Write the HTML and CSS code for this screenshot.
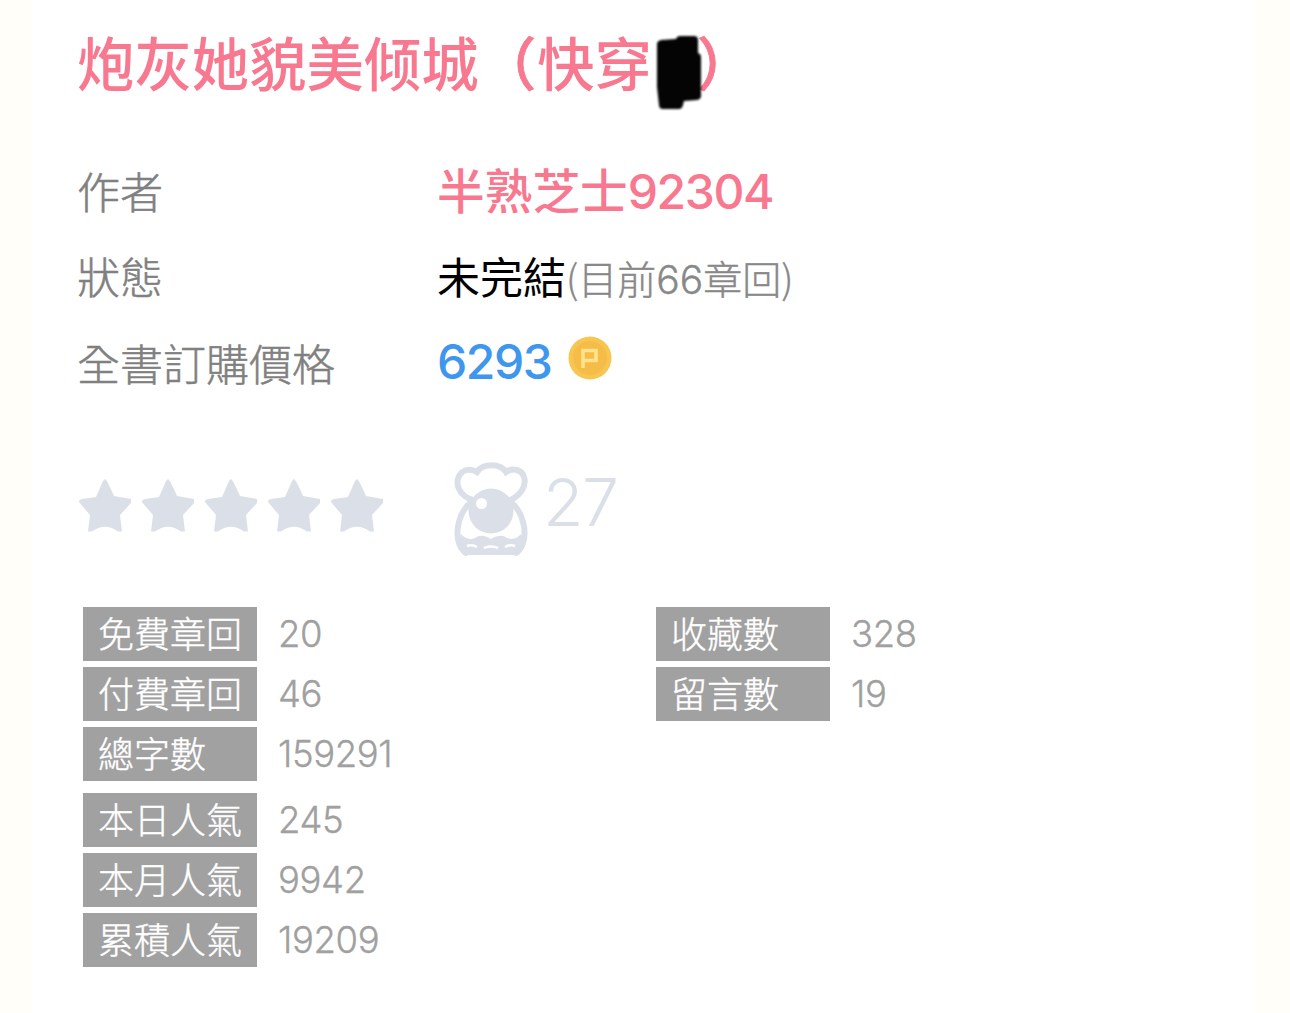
FILE: index.html
```html
<!DOCTYPE html>
<html lang="zh-Hant">
<head>
<meta charset="utf-8">
<title>炮灰她貌美倾城</title>
<link rel="stylesheet" href="styles.css">
</head>
<body>
<main class="card">
  <h1 class="title" lang="zh-Hans"><span>炮灰她貌美倾城</span><span class="open">（</span><span>快穿</span><svg class="marker" width="46" height="74" viewBox="0 0 46 74"><path d="M2 6q0-3 4-4l15-1q1-3 4-3h14q4 0 4 4v13q3 1 3 4v39q0 3-4 4l-13 1-1 4q-1 4-4 4H8q-4 0-4-4L2 49z"/></svg><span class="close">）</span></h1>

  <dl class="info">
    <div class="row"><dt>作者</dt><dd class="author">半熟芝士<span class="num">92304</span></dd></div>
    <div class="row state"><dt>狀態</dt><dd class="status">未完結<small class="chapters">(目前<span class="num">66</span>章回)</small></dd></div>
    <div class="row"><dt>全書訂購價格</dt><dd class="price"><span class="num">6293</span><svg class="coin" width="44" height="44" viewBox="0 0 44 44"><circle class="coin-rim" cx="22" cy="22" r="21.500"/><circle class="coin-face" cx="22" cy="22" r="17"/><path class="coin-mark" d="M15 32V14.500h13v10H15"/></svg></dd></div>
  </dl>

  <section class="rating">
    <svg class="stars" width="306" height="54" viewBox="0 0 306 54">
      <defs><path id="star" d="M27 0Q29 1 36 17L53 20V24L42 36L44 52.500H40Q27 43 14 52.500H10L12 36L1 23Q0 21 4 20L18 18L25 2Z"/></defs>
      <use href="#star"/><use href="#star" x="63"/><use href="#star" x="126"/><use href="#star" x="189"/><use href="#star" x="252"/>
    </svg>
    <svg class="chef" width="74" height="94" viewBox="0 0 74 94">
      <path class="outline" d="M19 38C5 34 1 22 5 14C9 7 17 6 23 10C29 1 46 1 52 10C59 5 68 8 70 15C73 24 66 34 56 38"/>
      <path class="outline" d="M17 40C5 50 1 69 5 81C7 87 9 90 14 92M57 40C69 50 73 69 69 81C67 87 65 90 60 92"/>
      <circle cx="37" cy="49" r="22.500"/>
      <circle class="shine" cx="27.500" cy="41.500" r="5.500"/>
      <path d="M7 72Q13 79 21 76Q27 71 37 77Q47 71 53 76Q61 79 67 72L70 83Q67 91 62 93H12Q7 91 4 83Z"/>
      <path class="lace" d="M13 84q5-2 10 1M30 86q7-3 14 0M51 85q5-3 10-1"/>
    </svg>
    <span class="votes">27</span>
  </section>

  <section class="stats">
    <div class="column">
      <div class="stat"><span class="tag">免費章回</span><span class="value">20</span></div>
      <div class="stat"><span class="tag">付費章回</span><span class="value">46</span></div>
      <div class="stat"><span class="tag">總字數</span><span class="value">159291</span></div>
      <div class="stat popular"><span class="tag">本日人氣</span><span class="value">245</span></div>
      <div class="stat"><span class="tag">本月人氣</span><span class="value">9942</span></div>
      <div class="stat"><span class="tag">累積人氣</span><span class="value">19209</span></div>
    </div>
    <div class="column">
      <div class="stat"><span class="tag">收藏數</span><span class="value">328</span></div>
      <div class="stat"><span class="tag">留言數</span><span class="value">19</span></div>
    </div>
  </section>
</main>
</body>
</html>
```
FILE: styles.css
```css
* { box-sizing: border-box; }

body {
  margin: 0;
  background: #fffef8;
  font-family: "Noto Sans CJK TC", sans-serif;
  font-weight: 300;
}

.card {
  height: 1013px;
  margin: 0 34px 0 32px;
  padding: 21px 0 0 45px;
  background: #fff;
  overflow: hidden;
}

.title {
  display: flex;
  height: 80px;
  margin: 0;
  color: #f7788f;
  font: 500 57.4px/80px "Noto Sans CJK SC", sans-serif;
  white-space: nowrap;
}

.open {
  margin: 0 1px 0 0;
  -webkit-text-stroke: 0.8px;
}

.marker {
  flex: none;
  margin: 17px 0 0 3px;
  overflow: visible;
  fill: #050404;
  filter: blur(1px);
}

.close {
  margin-left: -4px;
  -webkit-text-stroke: 0.8px;
}

.info { margin: 46px 0 0; }

.row {
  display: flex;
  height: 86px;
  line-height: 86px;
  white-space: nowrap;
}
.row.state { line-height: 84px; }

.row dt {
  width: 360px;
  color: #808080;
  font-size: 43px;
  -webkit-text-stroke: 0.5px;
}

.row dd { margin: 0; }
.num { font-family: Inter, sans-serif; }

.author {
  color: #f7788f;
  font-size: 47.7px;
  font-weight: 500;
  line-height: 84px;
}
.author .num,
.price .num {
  font-size: 48px;
  letter-spacing: -1.4px;
}

.status {
  color: #000;
  font-size: 43px;
  font-weight: 400;
}

.chapters {
  color: #888;
  font-size: 39px;
  font-weight: 300;
  -webkit-text-stroke: 0.4px;
}

.price {
  display: flex;
  color: #3f96ed;
  font-weight: 500;
}

.coin { margin: 17px 0 0 16px; }
.coin-rim { fill: #f7c650; }
.coin-face { fill: #f5bd48; }
.coin-mark { fill: none; stroke: #ffe38c; stroke-width: 3.5; }

.rating {
  display: flex;
  height: 96px;
  margin-top: 57px;
}

.stars {
  margin: 17px 0 0 1px;
  fill: #dbe0e8;
}
.chef { margin-left: 70px; fill: #dbe0e8; }
.outline { fill: none; stroke: #dbe0e8; stroke-width: 6; }
.shine { fill: #fff; }
.lace { fill: none; stroke: #fff; stroke-width: 2.5; }

.votes {
  margin-left: 15px;
  color: #dbe0e8;
  font: 300 66px/80px Inter, sans-serif;
  letter-spacing: -1.5px;
}

.stats {
  display: flex;
  margin: 49px 0 0 6px;
}

.column {
  display: flex;
  flex-direction: column;
  gap: 6px;
  width: 573px;
}

.stat {
  display: flex;
  height: 54px;
}
.popular { margin-top: 6px; }

.tag {
  width: 174px;
  margin-right: 21px;
  padding-left: 15px;
  background: #a1a1a1;
  color: #fff;
  font-size: 36px;
  line-height: 51px;
  -webkit-text-stroke: 0.4px;
}

.value {
  color: #a0a0a0;
  font: 300 36.500px/54px Inter, sans-serif;
  letter-spacing: -0.4px;
  -webkit-text-stroke: 0.3px;
}
```
